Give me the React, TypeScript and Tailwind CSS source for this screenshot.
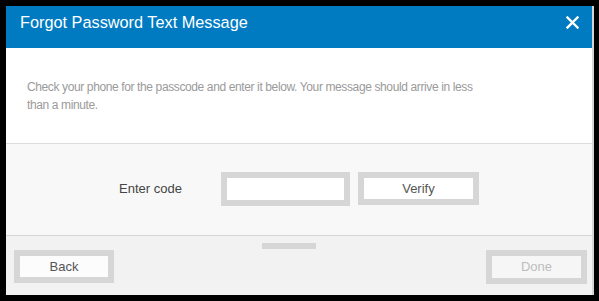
import React from "react";

export default function App() {
  const font = { fontFamily: '"Liberation Sans", Arial, sans-serif' };
  return (
    <div className="w-[599px] h-[301px] bg-black pt-[6px] pl-[6px] pr-[5px] pb-[6px]" style={font}>
      <div className="flex h-full flex-col border-r-2 border-[#d4d4d4]">
        <div className="flex h-[42px] shrink-0 items-center justify-between bg-[#007bc1] pb-[10px] pl-[14px] pr-[13px]">
          <span className="text-[16.3px] text-white">Forgot Password Text Message</span>
          <svg width="13" height="13" viewBox="0 0 13 13" className="mt-[1px]">
            <path d="M1.5 1.5 L11.5 11.5 M11.5 1.5 L1.5 11.5" stroke="white" strokeWidth="2.4" strokeLinecap="square" />
          </svg>
        </div>
        <div className="h-[96px] shrink-0 border-b border-[#dcdcdc] bg-white pl-[21px] pr-[40px] pt-[30px]">
          <p className="text-[12px] leading-[18px] tracking-[-0.38px] text-[#9a9a9a]">
            Check your phone for the passcode and enter it below. Your message should arrive in less
            <br />
            than a minute.
          </p>
        </div>
        <div className="flex h-[92px] shrink-0 items-center justify-center border-b border-[#d6d6d6] bg-[#f8f8f8] pb-[2px]">
          <span className="mr-[39px] text-[13px] text-[#444]">Enter code</span>
          <input className="h-[34px] w-[129px] border-[6px] border-[#d6d6d6] bg-white outline-none" />
          <button className="ml-[8px] h-[33px] w-[121px] border-[6px] border-[#d6d6d6] bg-white text-[13px] text-[#555]">
            Verify
          </button>
        </div>
        <div className="relative flex flex-1 items-start justify-between bg-[#f2f2f2] pl-[8px] pr-[5px] pt-[14px]">
          <div className="absolute left-[256px] top-[7px] h-[6px] w-[54px] bg-[#d6d6d6]" />
          <button className="h-[33px] w-[100px] border-[6px] border-[#d6d6d6] bg-[#fcfcfc] text-[13px] text-[#555]">
            Back
          </button>
          <button className="h-[34px] w-[101px] border-[6px] border-[#d6d6d6] bg-[#f6f6f6] text-[13px] text-[#bdbdbd]">
            Done
          </button>
        </div>
      </div>
    </div>
  );
}
